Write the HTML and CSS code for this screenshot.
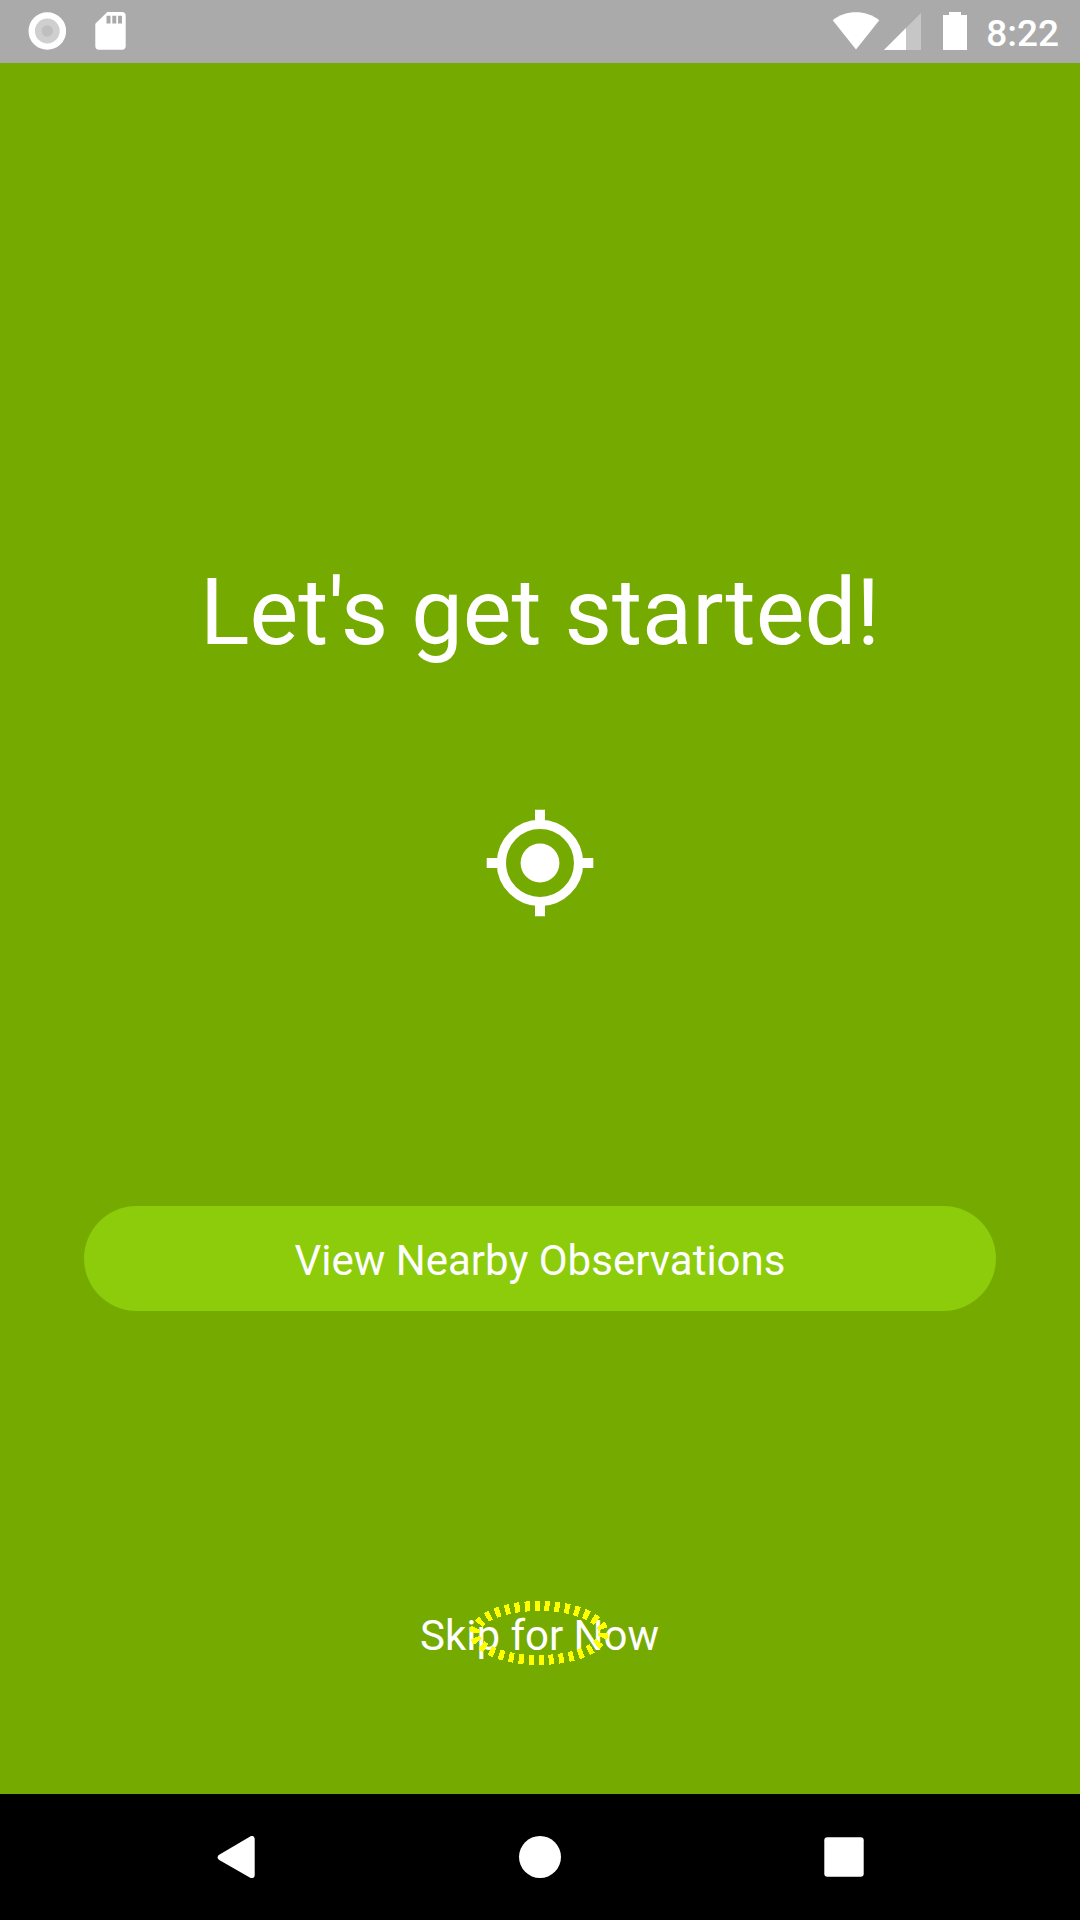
FILE: index.html
```html
<!DOCTYPE html>
<html lang="en">
<head>
<meta charset="utf-8">
<title>Let's get started!</title>
<link rel="stylesheet" href="styles.css">
</head>
<body>
<div class="screen">
  <header class="status-bar">
    <svg class="status-icon record" width="38" height="38" viewBox="0 0 38 38">
      <circle cx="19.300" cy="19" r="18.800" fill="#fff"/>
      <circle cx="19.300" cy="19" r="12.400" fill="#cfcfcf"/>
      <circle cx="19.300" cy="19" r="5.700" fill="#bfbfbf"/>
    </svg>
    <svg class="status-icon" width="31" height="38" viewBox="0 0 31 38">
      <path fill="#fff" d="M12.300 0H27q3.700 0 3.700 3.700V34q0 3.700-3.700 3.700H4Q.3 37.700.3 34V11.700z"/>
      <path fill="#aaa" d="M11.500 3.700h4v7.800h-4zM17.300 3.700h4v7.800h-4zM23 3.700h4v7.800h-4z"/>
    </svg>
    <div class="status-right">
      <svg class="status-icon" width="48" height="38" viewBox="0 0 48 38">
        <path fill="#fff" d="M.7 8.200C14 -2.400 33.500 -2.400 47.300 8.200L24 37.500z"/>
      </svg>
      <svg class="status-icon signal" width="38" height="38" viewBox="0 0 38 38">
        <path fill="#c6c6c6" d="M37 0v37H0z"/>
        <path fill="#fff" d="M22 15v22H0z"/>
      </svg>
      <svg class="status-icon battery" width="24" height="38" viewBox="0 0 24 38">
        <path fill="#fff" d="M6 0h12v3h6v35H0V3h6z"/>
      </svg>
      <span class="clock">8:22</span>
    </div>
  </header>
  <main class="welcome">
    <h1 class="title">Let's get started!</h1>
    <svg class="locate" width="108" height="108" viewBox="0 0 108 108">
      <circle cx="54" cy="54" r="19.400" fill="#fff"/>
      <circle cx="54" cy="54" r="38.600" fill="none" stroke="#fff" stroke-width="9.300"/>
      <path fill="#fff" d="M49 .700h10V13H49zM49 95h10v12.300H49zM.700 49H13v10H.700zM95 49h12.300v10H95z"/>
    </svg>
    <button class="nearby">View Nearby Observations</button>
    <div class="skip">
      <span>Skip for Now</span>
      <svg class="touch-marker" width="140" height="66" viewBox="0 0 140 66">
        <ellipse cx="70" cy="33" rx="64.500" ry="27" fill="none" stroke="#ff0" stroke-width="10" stroke-dasharray="5 5" shape-rendering="crispEdges"/>
      </svg>
    </div>
  </main>
  <nav class="nav-bar">
    <svg width="42" height="42" viewBox="0 0 42 42">
      <path fill="#fff" stroke="#fff" stroke-width="6" stroke-linejoin="round" d="M5.700 21.300L36.700 3v36.200z"/>
    </svg>
    <svg width="42" height="42" viewBox="0 0 42 42"><circle cx="21" cy="21" r="21" fill="#fff"/></svg>
    <svg width="42" height="42" viewBox="0 0 42 42"><rect x="1.300" y="1.300" width="39.400" height="39.400" rx="3" fill="#fff"/></svg>
  </nav>
</div>
</body>
</html>
```
FILE: styles.css
```css
body {
  margin: 0;
  font-family: Roboto, sans-serif;
  color: #fff;
}

svg {
  display: block;
  flex: none;
}

.screen {
  display: flex;
  flex-direction: column;
  width: 1080px;
  height: 1920px;
  background: #75ab00;
}

.status-bar {
  display: flex;
  gap: 29px;
  box-sizing: border-box;
  height: 63px;
  padding: 0 21px 0 28px;
  background: #aaa;
}

.status-icon {
  margin-top: 12.400px;
}

.status-right {
  display: flex;
  margin-left: auto;
}

.signal {
  margin: 13px 0 0 4px;
}

.battery {
  margin: 12px 0 0 21px;
}

.clock {
  margin-left: 19px;
  padding-top: 2px;
  font-size: 37px;
  font-weight: 500;
  line-height: 63px;
}

.welcome {
  display: flex;
  flex: 1;
  flex-direction: column;
  align-items: center;
  padding: 496px 84px 0;
}

.title {
  margin: 0;
  font-size: 92px;
  font-weight: 400;
  line-height: 108px;
  white-space: nowrap;
}

.locate {
  margin-top: 142px;
}

.nearby {
  box-sizing: border-box;
  width: 912px;
  height: 105px;
  margin-top: 289px;
  padding: 4px 0 0;
  border: 0;
  border-radius: 53px;
  background: #8ccc0a;
  color: #fff;
  font: 400 42px/101px Roboto, sans-serif;
}

.skip {
  position: relative;
  margin: 300px 1px 0 0;
  font-size: 42px;
  line-height: 50px;
}

.touch-marker {
  position: absolute;
  top: -11px;
  left: calc(50% - 70.500px);
}

.nav-bar {
  display: flex;
  justify-content: center;
  gap: 262px;
  box-sizing: border-box;
  height: 126px;
  padding-top: 42px;
  background: #000;
}
```
